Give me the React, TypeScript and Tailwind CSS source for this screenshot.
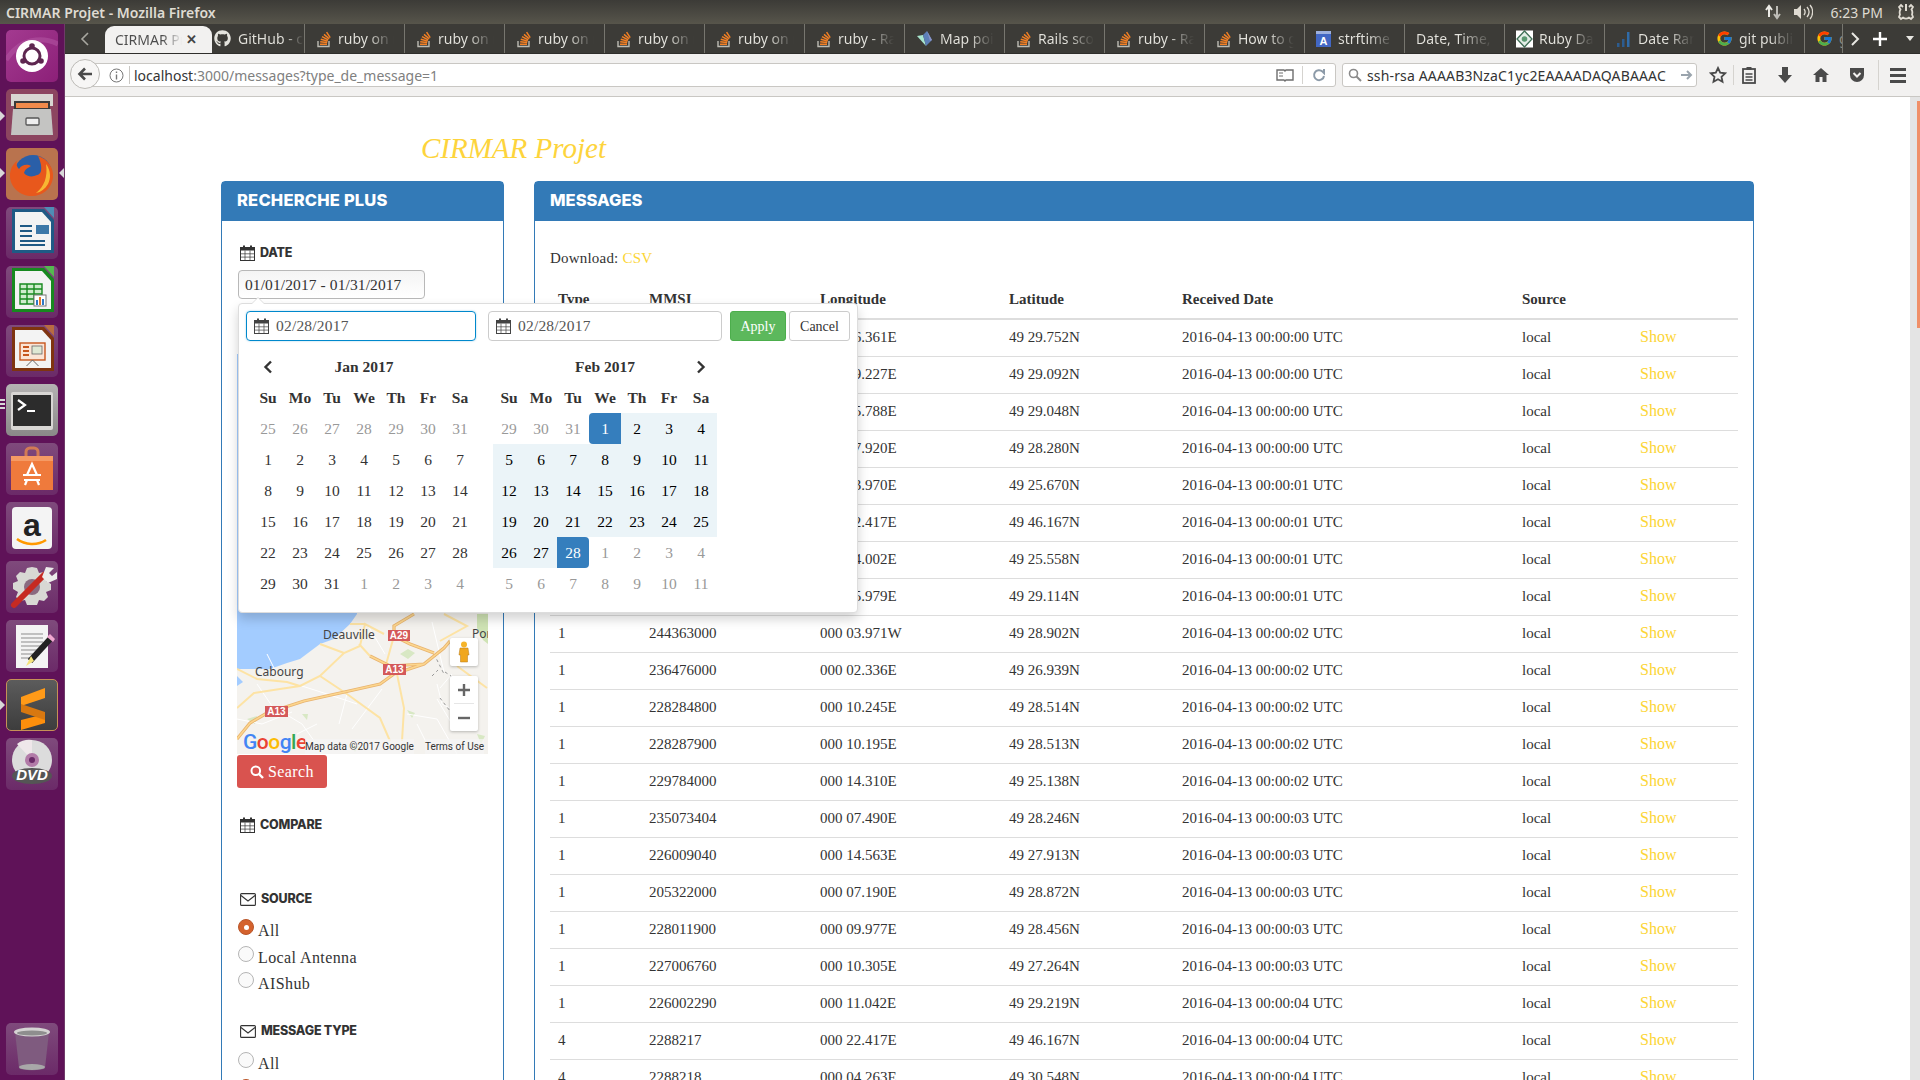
import React from "react";
import { FaGithub } from "react-icons/fa";
import { FcGoogle } from "react-icons/fc";

const slab = "font-['Liberation_Serif',serif]";
const sans = "font-['Noto_Sans',sans-serif]";
const head = "font-['Inter',sans-serif]";

function So() {
  return (
    <svg width="16" height="18" viewBox="0 0 16 18" className="shrink-0">
      <path d="M2 11v5.5h11V11" fill="none" stroke="#bcbbb3" strokeWidth="1.4" />
      <path d="M4 14.2h7M4.2 11.8l7 .8M4.8 9.2l6.9 1.9M6 6.7l6.2 3.2M8 4.4l5.2 4.4M10.6 2.2l3.6 5.4" stroke="#f48024" strokeWidth="1.5" fill="none" />
    </svg>
  );
}
function MapIco() {
  return (
    <svg width="18" height="18" viewBox="0 0 18 18" className="shrink-0">
      <path d="M1 6l6-1 3 11z" fill="#a8e6cf" />
      <path d="M7 5l4-4 5 9-6 6z" fill="#5c7fb8" />
      <path d="M11 1l5 9-2 1z" fill="#8a94c8" />
    </svg>
  );
}
function StrfIco() {
  return (
    <svg width="16" height="18" viewBox="0 0 16 18" className="shrink-0">
      <rect x="0" y="1" width="15" height="16" fill="#4267c4" />
      <rect x="0" y="1" width="15" height="3" fill="#9db0de" />
      <text x="7.5" y="15" textAnchor="middle" fontSize="11" fontWeight="700" fill="#fff" fontFamily="Liberation Sans">A</text>
    </svg>
  );
}
function RubyIco() {
  return (
    <svg width="17" height="18" viewBox="0 0 17 18" className="shrink-0">
      <rect width="17" height="17" y="0.5" fill="#fff" />
      <path d="M8.5 1l7.5 8-7.5 8L1 9z" fill="#e4eee7" stroke="#3f6e55" strokeWidth="1.3" />
      <circle cx="8.5" cy="9" r="2.8" fill="#5b9a72" />
    </svg>
  );
}
function BarsIco() {
  return (
    <svg width="16" height="18" viewBox="0 0 16 18" className="shrink-0">
      <rect x="1" y="13" width="2.5" height="4" fill="#2c5c8f" />
      <rect x="6" y="9" width="2.5" height="8" fill="#2c5c8f" />
      <rect x="11" y="2" width="2.5" height="15" fill="#2f6ba8" />
    </svg>
  );
}

const tabs: [string, React.ReactNode][] = [
  ["ruby on rails", <So />],
  ["ruby on rails", <So />],
  ["ruby on rails", <So />],
  ["ruby on rails", <So />],
  ["ruby on rails", <So />],
  ["ruby - Rails", <So />],
  ["Map points", <MapIco />],
  ["Rails scope", <So />],
  ["ruby - Rails", <So />],
  ["How to get", <So />],
  ["strftime", <StrfIco />],
  ["Date, Time,", null],
  ["Ruby Date", <RubyIco />],
  ["Date Range", <BarsIco />],
  ["git public", <FcGoogle size={17} className="shrink-0" />],
];

function Tab({ label, icon }: { label: string; icon: React.ReactNode }) {
  return (
    <div className="w-[100px] h-[29px] flex items-center gap-[6px] pl-[11px] pr-[10px] border-r border-[#77766f] overflow-hidden shrink-0">
      {icon}
      <span className={`${sans} text-[14px] whitespace-nowrap overflow-hidden flex-1 bg-gradient-to-r from-[#e4e3dd] from-55% to-[#3c3b37] bg-clip-text text-transparent`}>{label}</span>
    </div>
  );
}

function Tile({ cls, children }: { cls: string; children: React.ReactNode }) {
  return (
    <div className={`w-[52px] h-[52px] rounded-[5px] shrink-0 overflow-hidden ${cls}`}>
      <svg width="52" height="52" viewBox="0 0 52 52">{children}</svg>
    </div>
  );
}
const plain = "bg-gradient-to-b from-[#7f4a7c] to-[#6b2a68]";

function Launcher() {
  return (
    <div className="w-[65px] h-full bg-[#5f1258] border-r border-[#6f3a69] flex flex-col items-start pl-[6px] pt-[6px] pb-[5px] gap-[7px] shrink-0 relative">
      <Tile cls="bg-gradient-to-br from-[#a33a90] to-[#8c1f78]">
        <path d="M0 30C14 8 36 6 52 14" stroke="#b55aa5" strokeWidth="5" fill="none" opacity="0.5" />
        <circle cx="26" cy="26" r="16" fill="#fff" />
        <circle cx="26" cy="26" r="8" fill="none" stroke="#5e2750" strokeWidth="3" />
        <circle cx="26" cy="16" r="2.8" fill="#5e2750" /><circle cx="17" cy="31" r="2.8" fill="#5e2750" /><circle cx="35" cy="31" r="2.8" fill="#5e2750" />
      </Tile>
      <Tile cls="bg-[#8c4560]">
        <rect x="5" y="5" width="42" height="12" fill="#d8d6d2" />
        <rect x="8" y="12" width="36" height="8" fill="#3a3a3a" />
        <rect x="10" y="14" width="32" height="5" fill="#f08a4b" />
        <path d="M7 20h38l2 26H5z" fill="#c4c4c2" />
        <rect x="20" y="29" width="13" height="7" rx="1" fill="#eee" stroke="#555" strokeWidth="1.3" />
      </Tile>
      <Tile cls="bg-[#b9734e]">
        <circle cx="27" cy="26" r="19" fill="#2a5fa8" />
        <path d="M32 8c10 3 16 12 15 22-2 12-12 19-23 18C12 47 3 37 4 26c1-7 4-11 7-13-1 4 0 6 2 8 3-5 9-5 12-3-3 2-6 3-7 7 2 3 7 4 10 3 3-1 6-1 7-5 1-5-1-11-3-15z" fill="#e8581c" />
        <path d="M40 16c5 7 5 14 2 20-3 5-7 8-12 9 8-6 12-16 10-29z" fill="#f7b733" />
      </Tile>
      <Tile cls={plain}>
        <path d="M6 2h32l10 11v33H6z" fill="#1f5a85" />
        <path d="M9 5h27l9 10v28H9z" fill="#f3f3f3" />
        <path d="M38 0h10v11z" fill="#4f8db5" />
        <rect x="30" y="18" width="13" height="9" fill="#3d78a8" />
        <path d="M14 19h12M14 24h12M14 29h12M14 34h25M14 38h25" stroke="#1f5a85" strokeWidth="2.2" />
      </Tile>
      <Tile cls={plain}>
        <path d="M6 2h32l10 11v33H6z" fill="#17891f" />
        <path d="M9 5h27l9 10v28H9z" fill="#f3f3f3" />
        <path d="M38 0h10v11z" fill="#55b850" />
        <path d="M14 18h22v20H14zM14 23h22M14 28h22M14 33h22M21 18v20M28 18v20" fill="#cfeccd" stroke="#17891f" strokeWidth="1.4" />
        <rect x="28" y="29" width="12" height="11" fill="#fff" stroke="#777" />
        <rect x="30" y="34" width="2" height="5" fill="#2f78c4" /><rect x="33" y="31" width="2" height="8" fill="#e8792b" /><rect x="36" y="33" width="2" height="6" fill="#2f78c4" />
      </Tile>
      <Tile cls={plain}>
        <path d="M6 2h32l10 11v33H6z" fill="#7f3410" />
        <path d="M9 5h27l9 10v28H9z" fill="#f3f3f3" />
        <path d="M38 0h10v11z" fill="#b86b42" />
        <rect x="14" y="18" width="25" height="17" fill="#fbe5d6" stroke="#c6561d" strokeWidth="1.4" />
        <path d="M17 22h6M17 26h6M17 30h6" stroke="#c6561d" strokeWidth="2" />
        <rect x="26" y="21" width="10" height="8" fill="#dfe8d4" stroke="#666" strokeWidth="0.8" />
        <path d="M26.5 35l-6 6M26.5 35l6 6" stroke="#666" strokeWidth="1" />
      </Tile>
      <Tile cls="bg-gradient-to-b from-[#b5b3b3] to-[#8a8888]">
        <rect x="5" y="8" width="42" height="38" rx="2" fill="#d8d6d4" />
        <rect x="7" y="11" width="38" height="31" fill="#2c2c2c" />
        <path d="M12 16l7 5-7 5" stroke="#fff" strokeWidth="2.2" fill="none" />
        <rect x="21" y="26" width="8" height="2" fill="#fff" />
      </Tile>
      <Tile cls={plain}>
        <path d="M20 13v-4a4 4 0 014-4h4a4 4 0 014 4v4" stroke="#d27a55" strokeWidth="3" fill="none" />
        <path d="M5 13h42v34H5z" fill="#ef7a3c" />
        <path d="M5 13h42v5H5z" fill="#f59a64" />
        <path d="M21 32l5-11 5 11M17 32h18M18 37h16M21 37l-2 5M31 37l2 5" stroke="#fff" strokeWidth="2.2" fill="none" />
      </Tile>
      <Tile cls={plain}>
        <rect x="6" y="5" width="40" height="42" rx="4" fill="#f4f4f4" />
        <text x="26" y="34" textAnchor="middle" fontSize="32" fontWeight="700" fill="#222" fontFamily="Liberation Sans">a</text>
        <path d="M11 37c8 6 20 7 29 1" stroke="#f90" strokeWidth="2.6" fill="none" />
      </Tile>
      <Tile cls={plain}>
        <path d="M26 6l5 1 2 5 5-1 4 4-2 5 5 3v6l-5 2 2 5-4 4-5-1-2 5h-10l-2-5-5 1-4-4 2-5-5-3v-6l5-2-2-5 4-4 5 1 2-5z" fill="#d8d8d4" />
        <circle cx="26" cy="26" r="8" fill="#8a6a80" />
        <path d="M8 44L38 14" stroke="#c62a22" strokeWidth="6" strokeLinecap="round" />
        <path d="M36 16l4-10 8 1-5 5 3 3 5-4 0 7-9 4z" fill="#ececea" />
      </Tile>
      <Tile cls={plain}>
        <path d="M10 5h32v43H10z" fill="#f4f4f4" />
        <path d="M15 14h22M15 18h22M15 22h22M15 26h22M15 30h18M15 34h12M15 38h8" stroke="#8d8d8d" strokeWidth="1" />
        <path d="M46 17l-22 24" stroke="#222" strokeWidth="6" />
        <path d="M44 14l5 5-2 3-6-5z" fill="#f1a7d0" />
        <path d="M25 36l-5 10 8-5z" fill="#f5e37a" />
      </Tile>
      <Tile cls="bg-gradient-to-b from-[#5c5c5c] to-[#3d3d3d] border border-[#c69157]">
        <path d="M38 8v10L14 26V17z" fill="#ff9a18" />
        <path d="M14 26l24 8v9l-24 7V40l24-6z" fill="#fd8f0c" />
        <path d="M14 24l24 8v8L14 32z" fill="#d87810" />
      </Tile>
      <Tile cls={plain}>
        <circle cx="26" cy="22" r="20" fill="#dcdcdc" />
        <path d="M26 22L11 6a20 20 0 0115-4z" fill="#efe7ea" />
        <circle cx="26" cy="22" r="7" fill="#b27ba8" />
        <circle cx="26" cy="22" r="3" fill="#6b2a68" />
        <ellipse cx="26" cy="38" rx="20" ry="8" fill="#555" />
        <text x="26" y="42" textAnchor="middle" fontSize="15" fontWeight="700" fontStyle="italic" fill="#fff" fontFamily="Liberation Sans">DVD</text>
      </Tile>
      <div className="mt-auto">
        <Tile cls={plain}>
          <path d="M9 9h34l-4 36c-1 3-25 3-26 0z" fill="#7f5b7f" />
          <ellipse cx="26" cy="9" rx="18" ry="4.5" fill="#d5d3d3" />
          <ellipse cx="26" cy="10" rx="15" ry="2.5" fill="#8e8e8e" />
          <ellipse cx="26" cy="44" rx="13" ry="3" fill="#a8a8a8" />
        </Tile>
      </div>
      <div className="absolute left-0 top-[87px] w-0 h-0 border-y-[5px] border-y-transparent border-l-[5px] border-l-[#d8d8d8]" />
      <div className="absolute left-0 top-[144px] w-0 h-0 border-y-[5px] border-y-transparent border-l-[5px] border-l-[#d8d8d8]" />
      <div className="absolute right-0 top-[144px] w-0 h-0 border-y-[5px] border-y-transparent border-r-[5px] border-r-[#d8d8d8]" />
      <div className="absolute left-0 top-[375px] flex flex-col gap-[2px]"><div className="w-[5px] h-[2px] bg-[#d8d8d8]" /><div className="w-[5px] h-[2px] bg-[#d8d8d8]" /><div className="w-[5px] h-[2px] bg-[#d8d8d8]" /></div>
      <div className="absolute left-0 top-[676px] w-0 h-0 border-y-[5px] border-y-transparent border-l-[5px] border-l-[#d8d8d8]" />
    </div>
  );
}

function TitleBar() {
  return (
    <div className="h-[24px] bg-gradient-to-b from-[#3c3b37] to-[#57554b] flex items-center pl-[6px] pr-[6px]">
      <span className={`${sans} text-[14px] font-semibold text-[#dfdbd2] flex-1`}>CIRMAR Projet - Mozilla Firefox</span>
      <svg width="18" height="18" viewBox="0 0 18 18" className="mr-[11px]">
        <path d="M5 14V4M2 7l3-4 3 4" stroke="#ecebe6" strokeWidth="2" fill="none" />
        <path d="M13 3v11M10 11l3 4 3-4" stroke="#bdbcb6" strokeWidth="2" fill="none" />
      </svg>
      <svg width="20" height="16" viewBox="0 0 20 16" className="mr-[17px]">
        <path d="M1 5h3l4-4v14l-4-4H1z" fill="#dfdbd2" />
        <path d="M11 5c1.5 2 1.5 4 0 6M14 3c2.5 3 2.5 7 0 10M17 1c3.500 4 3.500 10 0 14" stroke="#dfdbd2" strokeWidth="1.3" fill="none" />
      </svg>
      <span className={`${sans} text-[14px] text-[#dfdbd2] mr-[15px]`}>6:23 PM</span>
      <svg width="16" height="18" viewBox="0 0 16 18">
        <path d="M5 4L3 2 1 4l1.500 2.500c-1 1.500-1 3.500-.5 5L1 14l2 2 2-1.500c2 1.500 4 1.500 6 0l2 1.500 2-2-1-2.500c.5-1.500.5-3.500-.5-5L15 4l-2-2-2 2" fill="none" stroke="#dfdbd2" strokeWidth="1.8" />
        <path d="M8 1v7" stroke="#dfdbd2" strokeWidth="2" />
      </svg>
    </div>
  );
}

function TabStrip() {
  return (
    <div className="h-[30px] bg-[#3c3b37] border-b border-[#2f2e2b] flex items-end">
      <div className="w-[40px] h-[29px] flex items-center justify-center">
        <svg width="10" height="16" viewBox="0 0 10 16"><path d="M8 2L2 8l6 6" stroke="#a8a7a0" strokeWidth="1.6" fill="none" /></svg>
      </div>
      <div className="w-[107px] h-[27px] bg-[#f2f1f0] rounded-t-[9px] flex items-center pl-[10px] pr-[15px] gap-[4px] shrink-0">
        <span className={`${sans} text-[14px] whitespace-nowrap overflow-hidden flex-1 bg-gradient-to-r from-[#4c4c4c] from-70% to-[#f2f1f0] bg-clip-text text-transparent`}>CIRMAR Projet</span>
        <span className="text-[13px] font-bold text-[#444] font-['Liberation_Sans',sans-serif]">✕</span>
      </div>
      <div className="w-[93px] h-[29px] flex items-center gap-[7px] pl-[2px] border-r border-[#77766f] overflow-hidden shrink-0">
        <FaGithub size={17} color="#e4e3dd" className="shrink-0" />
        <span className={`${sans} text-[14px] whitespace-nowrap overflow-hidden flex-1 bg-gradient-to-r from-[#e4e3dd] from-70% to-[#3c3b37] bg-clip-text text-transparent`}>GitHub - cirmar</span>
      </div>
      {tabs.map((t, i) => <Tab key={i} label={t[0]} icon={t[1]} />)}
      <div className="w-[38px] h-[29px] flex items-center gap-[6px] pl-[11px] overflow-hidden shrink-0 border-r border-[#77766f]">
        <FcGoogle size={17} className="shrink-0" />
        <span className={`${sans} text-[14px] text-[#8d8c86]`}>g</span>
      </div>
      <div className="flex-1 h-[29px] flex items-center pl-[7px] gap-[13px]">
        <svg width="10" height="16" viewBox="0 0 10 16"><path d="M2 2l6 6-6 6" stroke="#e8e7e2" strokeWidth="2" fill="none" /></svg>
        <svg width="14" height="14" viewBox="0 0 14 14"><path d="M7 0v14M0 7h14" stroke="#fff" strokeWidth="2.4" /></svg>
        <div className="ml-[6px] w-0 h-0 border-x-[4px] border-x-transparent border-t-[5px] border-t-[#e8e7e2]" />
      </div>
    </div>
  );
}

function NavBar() {
  return (
    <div className="h-[43px] bg-[#f2f1f0] border-b border-[#c9c7c3] flex items-center pl-[5px] relative">
      <div className="absolute left-[5px] top-[5px] w-[30px] h-[30px] rounded-full bg-[#f7f6f5] border border-[#bdbbb7] flex items-center justify-center z-10">
        <svg width="16" height="14" viewBox="0 0 16 14"><path d="M15 7H3M8 1.500L2.500 7 8 12.500" stroke="#4a4a4a" strokeWidth="2.6" fill="none" /></svg>
      </div>
      <div className="ml-[15px] w-[1251px] h-[24px] bg-white border border-[#c9c7c3] rounded-r-[3px] flex items-center pl-[23px] relative">
        <svg width="15" height="15" viewBox="0 0 15 15" className="mr-[5px] shrink-0"><circle cx="7.500" cy="7.500" r="6.500" fill="none" stroke="#777" /><rect x="6.800" y="6.500" width="1.400" height="5" fill="#777" /><rect x="6.800" y="3.500" width="1.400" height="1.500" fill="#777" /></svg>
        <div className="w-px h-[18px] bg-[#c9c7c3] mr-[4px]" />
        <span className={`${sans} text-[14px] whitespace-nowrap`}>
          <span className="text-[#333]">localhost</span><span className="text-[#808080]">:3000/messages?type_de_message=1</span>
        </span>
        <div className="ml-auto flex items-center">
          <svg width="18" height="14" viewBox="0 0 18 14" className="mr-[8px]"><path d="M1 2h7l1 1 1-1h7v10h-7l-1 1-1-1H1z" fill="none" stroke="#6e6e6e" strokeWidth="1.400" /><path d="M3 5h4M3 8h4" stroke="#6e6e6e" /></svg>
          <div className="w-px h-[18px] bg-[#d5d3cf] mr-[9px]" />
          <svg width="14" height="14" viewBox="0 0 14 14" className="mr-[9px]"><path d="M12 8a5 5 0 11-1.500-4.500L12 5V1" stroke="#8c9aa8" strokeWidth="2" fill="none" /></svg>
        </div>
      </div>
      <div className="ml-[6px] w-[355px] h-[24px] bg-white border border-[#c9c7c3] rounded-[3px] flex items-center pl-[5px] pr-[3px] gap-[5px]">
        <svg width="14" height="14" viewBox="0 0 14 14" className="shrink-0"><circle cx="5.500" cy="5.500" r="4" fill="none" stroke="#8a8a8a" strokeWidth="1.600" /><path d="M8.500 8.500L13 13" stroke="#8a8a8a" strokeWidth="2" /></svg>
        <span className={`${sans} text-[14px] tracking-[0.15px] text-[#333] whitespace-nowrap overflow-hidden flex-1`}>ssh-rsa AAAAB3NzaC1yc2EAAAADAQABAAAC</span>
        <svg width="12" height="12" viewBox="0 0 12 12" className="shrink-0"><path d="M0 6h9M6 2l4 4-4 4" stroke="#9aa4ad" strokeWidth="2" fill="none" /></svg>
      </div>
      <div className="flex items-center pl-[12px]">
        <svg width="18" height="18" viewBox="0 0 18 18"><path d="M9 2l2.200 4.700 5 .6-3.700 3.500 1 5L9 13.300 4.500 15.800l1-5L1.800 7.300l5-.6z" fill="none" stroke="#4a4a4a" strokeWidth="1.800" /></svg>
        <div className="w-px h-[20px] bg-[#d5d3cf] ml-[6px] mr-[8px]" />
        <svg width="14" height="18" viewBox="0 0 14 18"><rect x="1" y="3" width="12" height="14" fill="none" stroke="#4a4a4a" strokeWidth="1.800" /><rect x="4.500" y="1" width="5" height="3" fill="#4a4a4a" /><path d="M3.500 8h7M3.500 11h7M3.500 14h7" stroke="#4a4a4a" strokeWidth="1.500" /></svg>
        <svg width="14" height="18" viewBox="0 0 14 18" className="ml-[22px]"><path d="M4 1h6v8h4l-7 8-7-8h4z" fill="#4a4a4a" /></svg>
        <svg width="16" height="16" viewBox="0 0 16 16" className="ml-[21px]"><path d="M8 1L0 8h2.500v7H6.500v-5h3v5h4V8H16z" fill="#4a4a4a" /></svg>
        <svg width="16" height="16" viewBox="0 0 16 16" className="ml-[20px]"><path d="M1 1h14v7a7 7 0 01-14 0z" fill="#4a4a4a" /><path d="M4.500 6L8 9.500 11.500 6" stroke="#f2f1f0" strokeWidth="2" fill="none" /></svg>
        <div className="w-px h-[30px] bg-[#d5d3cf] ml-[13px] mr-[11px]" />
        <div className="flex flex-col gap-[3px]"><div className="w-[16px] h-[3px] bg-[#4a4a4a]" /><div className="w-[16px] h-[3px] bg-[#4a4a4a]" /><div className="w-[16px] h-[3px] bg-[#4a4a4a]" /></div>
      </div>
    </div>
  );
}

function CalIcon({ color = "#333" }: { color?: string }) {
  return (
    <svg width="15" height="16" viewBox="0 0 15 16" className="shrink-0">
      <rect x="0.500" y="2.500" width="14" height="13" fill="none" stroke={color} />
      <rect x="0.500" y="2.500" width="14" height="3" fill={color} />
      <path d="M5 5.500v10M10 5.500v10M.5 8.800h14M.5 12.100h14" stroke={color} strokeWidth="0.700" />
      <rect x="3" y="0.500" width="2" height="4" fill={color} /><rect x="10" y="0.500" width="2" height="4" fill={color} />
    </svg>
  );
}
function MailIcon() {
  return (
    <svg width="16" height="13" viewBox="0 0 16 13" className="shrink-0">
      <rect x="0.600" y="0.600" width="14.800" height="11.800" rx="1" fill="none" stroke="#333" strokeWidth="1.100" />
      <path d="M1 2.500l7 5.500 7-5.500" fill="none" stroke="#333" strokeWidth="1.100" />
    </svg>
  );
}

function SectionHead({ icon, label, cls }: { icon: React.ReactNode; label: string; cls: string }) {
  return (
    <div className={`flex items-center gap-[5px] pl-[3px] h-[18px] ${cls}`}>
      {icon}
      <span className={`${head} text-[12.500px] font-extrabold text-[#333] tracking-[-0.2px] whitespace-nowrap`}>{label}</span>
    </div>
  );
}

function Radio({ label, checked, cls }: { label: string; checked?: boolean; cls: string }) {
  return (
    <div className={`flex items-start pl-px ${cls}`}>
      {checked ? (
        <div className="w-[16px] h-[16px] rounded-full bg-[#d4622d] border border-[#b9562a] flex items-center justify-center shrink-0">
          <div className="w-[5px] h-[5px] rounded-full bg-white" />
        </div>
      ) : (
        <div className="w-[16px] h-[16px] rounded-full bg-[#fafafa] border border-[#b5b5b5] shrink-0" />
      )}
      <span className={`${slab} text-[16px] leading-[20px] text-[#333] ml-[4px] mt-[2px] tracking-[0.4px] whitespace-nowrap`}>{label}</span>
    </div>
  );
}

function MapBox() {
  return (
    <div className="relative mt-[55px] w-[251px] h-[400px] bg-[#f4f2ee] overflow-hidden">
      <svg width="251" height="400" viewBox="0 0 251 400" className="absolute inset-0">
        <g transform="translate(0 260)">
          <path d="M0-260H120V0L113 10 97 25 83 30 63 45 50 49 33 55 17 55 0 55z" fill="#a3ccff" />
          <path d="M0 62l6 6-6 4z" fill="#a3ccff" />
          <path d="M240 0h11v30l-5-4-6-12z" fill="#cfe3b4" />
          <path d="M163 40l8-5 7 4-7 6zM10 105l10-3-2 8zM65 100l6 0-1 6zM170 96l8 3-3 5zM112 130l10 2-4 6zM240 120l8 2-4 8z" fill="#d8e8c4" />
          <path d="M20 70l15 22 30 18 20 28M120 90l-30-10-25-8M130 10l18 30M200 70l5 20 20 10M180 110l10 20M60 120l20-10M215 60l-12 14M195 8l12 50M0 105l25 5 30-12M110 80l-8 30M145 75l-30 40M170 100l30 5 20 35M215 110l-15-25M30 40l10 20M225 75l15 30" fill="none" stroke="#ffffff" strokeWidth="1" />
          <path d="M0 94L17 79 43 75 63 72 83 62 107 39 123 32 128 10 147 20M83 62L110 80 143 104 153 127M122 30L133 42M160 60L167 94 165 127M157 22L148 54M0 55L20 65 50 68 63 72M207 0L230 12 203 27M220 52L250 74M128 10L113 10M107 39L83 30" fill="none" stroke="#fde3a4" strokeWidth="2" />
          <path d="M197 40l6 12 4 8M195 62l6-6M208 58l6 4 4 6M203 84l10 13" fill="none" stroke="#999" strokeWidth="1" strokeDasharray="3 3" />
          <path d="M0 125L13 109 30 99 67 87 103 79 143 70 157 60 187 50 207 34 213 27M133 42L153 52 187 50M177 0L157 12 157 22 173 30 197 39" fill="none" stroke="#e8b36f" strokeWidth="3.200" />
          <path d="M0 125L13 109 30 99 67 87 103 79 143 70 157 60 187 50 207 34 213 27M133 42L153 52 187 50M177 0L157 12 157 22 173 30 197 39" fill="none" stroke="#fcd68e" strokeWidth="1.500" />
        </g>
      </svg>
      <div className={`${sans} absolute left-[86px] bottom-[111px] text-[12px] leading-[16px] text-[#444]`}>Deauville</div>
      <div className={`${sans} absolute left-[18px] bottom-[74px] text-[12px] leading-[16px] text-[#444]`}>Cabourg</div>
      <div className={`${sans} absolute left-[235px] bottom-[112px] text-[12px] leading-[16px] text-[#444]`}>Por</div>
      <div className="absolute left-[151px] bottom-[113px] w-[22px] h-[11px] bg-[#d4595a] text-white text-[10px] leading-[11px] text-center font-bold font-['Liberation_Sans',sans-serif]">A29</div>
      <div className="absolute left-[146px] bottom-[79px] w-[23px] h-[11px] bg-[#d4595a] text-white text-[10px] leading-[11px] text-center font-bold font-['Liberation_Sans',sans-serif]">A13</div>
      <div className="absolute left-[28px] bottom-[37px] w-[23px] h-[11px] bg-[#d4595a] text-white text-[10px] leading-[11px] text-center font-bold font-['Liberation_Sans',sans-serif]">A13</div>
      <div className="absolute left-[213px] bottom-[88px] w-[28px] h-[28px] bg-white rounded-[2px] flex items-center justify-center shadow-[0_1px_3px_rgba(0,0,0,0.25)]">
        <svg width="12" height="22" viewBox="0 0 12 22"><circle cx="6" cy="3.500" r="3" fill="#f5b42a" /><path d="M2 7h8l1 7H9.500v7h-7v-7H1z" fill="#f0a71e" stroke="#b5781a" strokeWidth="0.500" /></svg>
      </div>
      <div className="absolute left-[213px] bottom-[23px] w-[28px] h-[55px] bg-white rounded-[2px] flex flex-col items-center shadow-[0_1px_3px_rgba(0,0,0,0.25)]">
        <div className="h-[27px] flex items-center"><svg width="12" height="12" viewBox="0 0 12 12"><path d="M6 0v12M0 6h12" stroke="#666" strokeWidth="2.400" /></svg></div>
        <div className="w-[20px] h-px bg-[#e6e6e6]" />
        <div className="h-[27px] flex items-center"><svg width="12" height="12" viewBox="0 0 12 12"><path d="M0 6h12" stroke="#666" strokeWidth="2.400" /></svg></div>
      </div>
      <div className="absolute left-[6px] bottom-[0px] text-[21px] leading-[24px] font-medium font-['Roboto',sans-serif] whitespace-nowrap tracking-[-0.5px]">
        <span className="text-[#4285f4]">G</span><span className="text-[#ea4335]">o</span><span className="text-[#fbbc05]">o</span><span className="text-[#4285f4]">g</span><span className="text-[#34a853]">l</span><span className="text-[#ea4335]">e</span>
      </div>
      <div className="absolute left-[68px] bottom-[1px] h-[14px] w-[183px] flex items-center text-[10px] text-[#333] font-['Roboto',sans-serif] whitespace-nowrap">
        <span className="bg-[#f5f5f5]/70">Map data ©2017 Google</span><span className="ml-[11px] bg-[#f5f5f5]/70">Terms of Use</span>
      </div>
    </div>
  );
}

const jan = [25,26,27,28,29,30,31,1,2,3,4,5,6,7,8,9,10,11,12,13,14,15,16,17,18,19,20,21,22,23,24,25,26,27,28,29,30,31,1,2,3,4];
const feb = [29,30,31,1,2,3,4,5,6,7,8,9,10,11,12,13,14,15,16,17,18,19,20,21,22,23,24,25,26,27,28,1,2,3,4,5,6,7,8,9,10,11];
const dows = ["Su","Mo","Tu","We","Th","Fr","Sa"];

function Cal({ title, cells, left, right, state }: { title: string; cells: number[]; left?: boolean; right?: boolean; state: (i: number) => string }) {
  return (
    <div className={`w-[224px] grid grid-cols-7 auto-rows-[31px] ${slab} text-[15.500px] text-[#333] text-center items-center shrink-0`}>
      <div className="flex justify-center">
        {left && <svg width="10" height="14" viewBox="0 0 10 14"><path d="M8 1.500L2.500 7 8 12.500" stroke="#333" strokeWidth="2.400" fill="none" /></svg>}
      </div>
      <div className="col-span-5 font-bold">{title}</div>
      <div className="flex justify-center">
        {right && <svg width="10" height="14" viewBox="0 0 10 14"><path d="M2 1.500L7.500 7 2 12.500" stroke="#333" strokeWidth="2.400" fill="none" /></svg>}
      </div>
      {dows.map((d) => <div key={d} className="font-bold">{d}</div>)}
      {cells.map((c, i) => <div key={i} className={`h-[31px] leading-[31px] ${state(i)}`}>{c}</div>)}
    </div>
  );
}
const off = "text-[#999]";
const janState = (i: number) => (i < 7 || i >= 38 ? off : "");
const febState = (i: number) => {
  if (i < 3 || i >= 31) return off;
  if (i === 3) return "bg-[#357ebd] text-white rounded-l-[4px]";
  if (i === 30) return "bg-[#357ebd] text-white rounded-r-[4px]";
  return "bg-[#ebf4f8] text-black";
};

function DateInput({ active, w }: { active?: boolean; w: string }) {
  return (
    <div className={`${w} h-[30px] rounded-[4px] border flex items-center pl-[7px] gap-[7px] shrink-0 ${active ? "border-[#08c] shadow-[0_0_2px_rgba(0,136,204,0.4)]" : "border-[#ccc]"}`}>
      <CalIcon color="#444" />
      <span className={`${slab} text-[15.500px] text-[#555] tracking-[0.2px]`}>02/28/2017</span>
    </div>
  );
}

function Picker() {
  return (
    <div className="absolute left-[1px] top-[33px] z-20 w-[620px] h-[310px] bg-white border border-[#ddd] rounded-[4px] shadow-[0_6px_12px_rgba(0,0,0,0.175)] pt-[7px] pl-[7px]">
      <div className="absolute left-[12px] -top-[7px] w-0 h-0 border-x-[7px] border-x-transparent border-b-[7px] border-b-[#ddd]" />
      <div className="absolute left-[13px] -top-[6px] w-0 h-0 border-x-[6px] border-x-transparent border-b-[6px] border-b-white" />
      <div className="flex items-start">
        <DateInput active w="w-[230px]" />
        <div className="w-[12px]" />
        <DateInput w="w-[234px]" />
        <button className={`${slab} ml-[8px] w-[56px] h-[30px] rounded-[3px] bg-[#5cb85c] border border-[#4cae4c] text-white text-[14px]`}>Apply</button>
        <button className={`${slab} ml-[3px] w-[61px] h-[30px] rounded-[3px] bg-white border border-[#ccc] text-[#333] text-[14px]`}>Cancel</button>
      </div>
      <div className="flex mt-[10px] pl-[6px] gap-[17px]">
        <Cal title="Jan 2017" cells={jan} left state={janState} />
        <Cal title="Feb 2017" cells={feb} right state={febState} />
      </div>
    </div>
  );
}

function LeftPanel() {
  return (
    <div className="w-[283px] h-[1000px] rounded-t-[4px] border border-[#337ab7] shrink-0 bg-white">
      <div className={`${head} h-[39px] pb-[3px] bg-[#337ab7] text-white text-[16.500px] font-extrabold flex items-center pl-[15px] tracking-[0.2px]`}>RECHERCHE PLUS</div>
      <div className="pl-[15px] pt-[23px]">
        <SectionHead icon={<CalIcon />} label="DATE" cls="" />
        <div className="relative mt-[8px]">
          <div className={`ml-px w-[187px] h-[29px] rounded-[4px] border border-[#b8b8b8] bg-gradient-to-b from-[#f4f4f4] to-white flex items-center pl-[6px] ${slab} text-[15.500px] text-[#333] tracking-[0.1px]`}>01/01/2017 - 01/31/2017</div>
          <Picker />
        </div>
        <MapBox />
        <button className={`${slab} mt-px w-[90px] h-[33px] rounded-[3px] bg-[#d9534f] text-white text-[16px] flex items-center justify-center gap-[4px] tracking-[0.4px]`}>
          <svg width="14" height="14" viewBox="0 0 14 14"><circle cx="5.800" cy="5.800" r="4.300" fill="none" stroke="#fff" strokeWidth="2" /><path d="M9 9l4 4" stroke="#fff" strokeWidth="2.400" /></svg>
          Search
        </button>
        <SectionHead icon={<CalIcon />} label="COMPARE" cls="mt-[28px]" />
        <SectionHead icon={<MailIcon />} label="SOURCE" cls="mt-[56px]" />
        <div className="mt-[11px]">
          <Radio label="All" checked cls="h-[27px]" />
          <Radio label="Local Antenna" cls="h-[26px]" />
          <Radio label="AIShub" cls="h-[26px]" />
        </div>
        <SectionHead icon={<MailIcon />} label="MESSAGE TYPE" cls="mt-[24px]" />
        <div className="mt-[12px]">
          <Radio label="All" cls="h-[27px]" />
          <Radio label="Position" checked cls="h-[26px]" />
        </div>
      </div>
    </div>
  );
}

const rows: [string, string, string, string, string][] = [
  ["1","228011700","000 06.361E","49 29.752N","00"],
  ["1","227006770","000 09.227E","49 29.092N","00"],
  ["1","226002310","000 05.788E","49 29.048N","00"],
  ["1","228284900","000 07.920E","49 28.280N","00"],
  ["1","229784100","000 03.970E","49 25.670N","01"],
  ["4","2288217","000 22.417E","49 46.167N","01"],
  ["1","235073500","000 14.002E","49 25.558N","01"],
  ["1","226009100","000 05.979E","49 29.114N","01"],
  ["1","244363000","000 03.971W","49 28.902N","02"],
  ["1","236476000","000 02.336E","49 26.939N","02"],
  ["1","228284800","000 10.245E","49 28.514N","02"],
  ["1","228287900","000 10.195E","49 28.513N","02"],
  ["1","229784000","000 14.310E","49 25.138N","02"],
  ["1","235073404","000 07.490E","49 28.246N","03"],
  ["1","226009040","000 14.563E","49 27.913N","03"],
  ["1","205322000","000 07.190E","49 28.872N","03"],
  ["1","228011900","000 09.977E","49 28.456N","03"],
  ["1","227006760","000 10.305E","49 27.264N","03"],
  ["1","226002290","000 11.042E","49 29.219N","04"],
  ["4","2288217","000 22.417E","49 46.167N","04"],
  ["4","2288218","000 04.263E","49 30.548N","04"],
];

function RightPanel() {
  const th = "text-left font-bold pl-[8px] align-bottom pb-[8px]";
  const td = "pl-[8px] align-middle pb-px";
  return (
    <div className="w-[1220px] h-[1000px] rounded-t-[4px] border border-[#337ab7] shrink-0 bg-white">
      <div className={`${head} h-[39px] pb-[3px] bg-[#337ab7] text-white text-[16.500px] font-extrabold flex items-center pl-[15px]`}>MESSAGES</div>
      <div className="pl-[15px]">
        <div className={`${slab} text-[15px] text-[#333] pt-[27px] h-[48px] leading-[20px] tracking-[0.2px]`}>
          Download: <span className="text-[#fcd535]">CSV</span>
        </div>
        <table className={`${slab} w-[1188px] table-fixed border-collapse text-[15px] text-[#333] mt-[15px]`}>
          <colgroup>
            <col className="w-[91px]" /><col className="w-[171px]" /><col className="w-[189px]" /><col className="w-[173px]" /><col className="w-[340px]" /><col className="w-[118px]" /><col className="w-[106px]" />
          </colgroup>
          <thead>
            <tr className="border-b-2 border-[#ddd] h-[35px]">
              <th className={th}>Type</th><th className={th}>MMSI</th><th className={th}>Longitude</th><th className={th}>Latitude</th><th className={th}>Received Date</th><th className={th}>Source</th><th className={th}></th>
            </tr>
          </thead>
          <tbody>
            {rows.map((r, i) => (
              <tr key={i} className="h-[37px] border-b border-[#ddd]">
                <td className={td}>{r[0]}</td>
                <td className={td}>{r[1]}</td>
                <td className={td}>{r[2]}</td>
                <td className={td}>{r[3]}</td>
                <td className={td}>2016-04-13 00:00:{r[4]} UTC</td>
                <td className={td}>local</td>
                <td className={`${td} text-[#fcd535] text-[16px]`}>Show</td>
              </tr>
            ))}
          </tbody>
        </table>
      </div>
    </div>
  );
}

export default function App() {
  return (
    <div className="w-[1920px] h-[1080px] overflow-hidden flex flex-col bg-white">
      <TitleBar />
      <div className="flex flex-1 min-h-0">
        <Launcher />
        <div className="flex-1 min-w-0 flex flex-col">
          <TabStrip />
          <NavBar />
          <div className="flex-1 min-h-0 flex overflow-hidden">
            <div className="flex-1 min-w-0 pl-[156px] relative">
              <div className="pt-[30px] pl-[200px] h-[84px] text-[29px] leading-[42px] italic text-[#fdd43c] font-['Liberation_Serif',serif] whitespace-nowrap">CIRMAR Projet</div>
              <div className="flex gap-[30px] items-start">
                <LeftPanel />
                <RightPanel />
              </div>
            </div>
            <div className="w-[10px] bg-[#e4e4e4] pt-[4px] pl-[7px] shrink-0">
              <div className="w-[3px] h-[227px] bg-[#f08f68]" />
            </div>
          </div>
        </div>
      </div>
    </div>
  );
}
